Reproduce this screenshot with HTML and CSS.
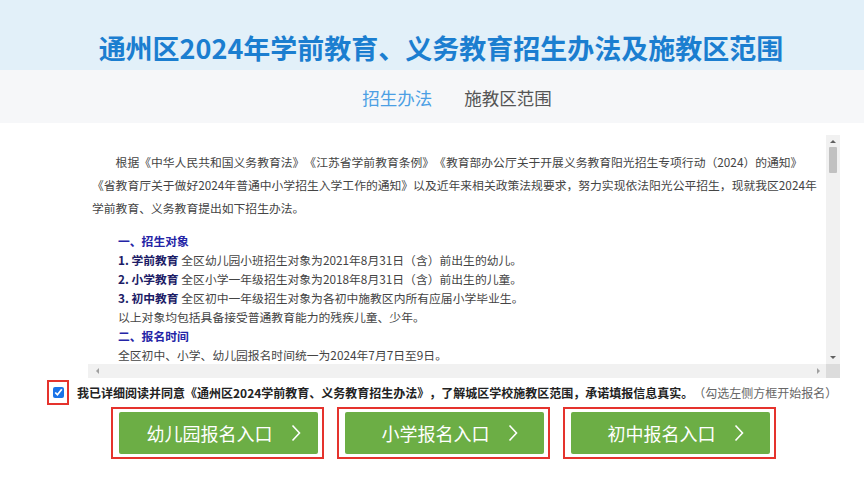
FILE: index.html
```html
<!DOCTYPE html>
<html lang="zh-CN">
<head>
<meta charset="utf-8">
<title>通州区2024年学前教育、义务教育招生办法及施教区范围</title>
<link rel="stylesheet" href="styles.css">
</head>
<body>
<header class="header">
  <h1 class="title">通州区2024年学前教育、义务教育招生办法及施教区范围</h1>
</header>
<nav class="tabs">
  <span class="tab tab-active">招生办法</span>
  <span class="tab">施教区范围</span>
</nav>
<main class="main">
  <div class="scrollbox">
    <div class="viewport">
      <p class="intro">根据《中华人民共和国义务教育法》《江苏省学前教育条例》《教育部办公厅关于开展义务教育阳光招生专项行动（2024）的通知》<br>《省教育厅关于做好2024年普通中小学招生入学工作的通知》以及近年来相关政策法规要求，努力实现依法阳光公平招生，现就我区2024年学前教育、义务教育提出如下招生办法。</p>
      <div class="section">
        <div class="sec-title">一、招生对象</div>
        <div class="line"><b class="label">1. 学前教育</b> 全区幼儿园小班招生对象为2021年8月31日（含）前出生的幼儿。</div>
        <div class="line"><b class="label">2. 小学教育</b> 全区小学一年级招生对象为2018年8月31日（含）前出生的儿童。</div>
        <div class="line"><b class="label">3. 初中教育</b> 全区初中一年级招生对象为各初中施教区内所有应届小学毕业生。</div>
        <div class="line">以上对象均包括具备接受普通教育能力的残疾儿童、少年。</div>
        <div class="sec-title">二、报名时间</div>
        <div class="line">全区初中、小学、幼儿园报名时间统一为2024年7月7日至9日。</div>
      </div>
    </div>
    <div class="vbar">
      <span class="arrow arrow-up"></span>
      <span class="vthumb"></span>
      <span class="vspace"></span>
      <span class="arrow arrow-down"></span>
    </div>
    <div class="hbar">
      <span class="arrow arrow-left"></span>
      <span class="arrow arrow-right"></span>
    </div>
    <div class="corner"></div>
  </div>
  <div class="agree">
    <span class="mark mark-check"><input type="checkbox" class="check" checked></span>
    <span class="agree-text"><b>我已详细阅读并同意《通州区2024学前教育、义务教育招生办法》，了解城区学校施教区范围，承诺填报信息真实。</b><span class="hint">（勾选左侧方框开始报名）</span></span>
  </div>
  <div class="buttons">
    <span class="mark"><a class="btn" href="#">幼儿园报名入口<svg class="chev" viewBox="0 0 10 18" width="10" height="18"><path d="M1.5 1.5 L8.5 9 L1.5 16.5" fill="none" stroke="#fff" stroke-width="1.6"/></svg></a></span>
    <span class="mark"><a class="btn" href="#">小学报名入口<svg class="chev" viewBox="0 0 10 18" width="10" height="18"><path d="M1.5 1.5 L8.5 9 L1.5 16.5" fill="none" stroke="#fff" stroke-width="1.6"/></svg></a></span>
    <span class="mark"><a class="btn" href="#">初中报名入口<svg class="chev" viewBox="0 0 10 18" width="10" height="18"><path d="M1.5 1.5 L8.5 9 L1.5 16.5" fill="none" stroke="#fff" stroke-width="1.6"/></svg></a></span>
  </div>
</main>
</body>
</html>
```
FILE: styles.css
```css
* { box-sizing: border-box; }
html, body { margin: 0; padding: 0; }
body {
  width: 864px;
  height: 492px;
  overflow: hidden;
  background: #fff;
  font-family: "Noto Sans CJK SC", "Noto Sans", sans-serif;
  color: #333;
  text-spacing-trim: space-all;
}
.header {
  height: 70px;
  background: #e2f0f9;
  display: flex;
  align-items: center;
  justify-content: center;
  padding: 26px 0 0 18px;
}
.title {
  margin: 0;
  font-size: 27px;
  line-height: 30px;
  font-weight: 700;
  color: #1b7ed0;
  white-space: nowrap;
}
.tabs {
  height: 53px;
  background: #f6f7f9;
  display: flex;
  align-items: center;
  justify-content: center;
  gap: 32px;
  padding: 2px 0 0 50px;
}
.tab {
  font-size: 17.5px;
  color: #555;
  line-height: 24px;
}
.tab-active { color: #4c9fe4; }
.main {
  padding: 12px 0 0 88px;
}
.scrollbox {
  width: 752px;
  display: grid;
  grid-template-columns: 738px 14px;
  grid-template-rows: 229px 14px;
}
.viewport {
  overflow: hidden;
  padding: 15px 0 0 4px;
  font-size: 11.8px;
}
.intro {
  margin: 0 0 12px;
  text-indent: 2em;
  line-height: 23px;
  color: #444;
}
.section {
  margin-left: 26px;
  line-height: 19px;
  white-space: nowrap;
  color: #444;
}
.sec-title {
  font-weight: 700;
  color: #2424a6;
}
.label {
  color: #1c1c66;
}
.vbar {
  background: #f1f1f1;
  display: flex;
  flex-direction: column;
  align-items: center;
}
.vthumb {
  width: 8px;
  height: 26px;
  background: #c1c1c1;
  border-radius: 1px;
}
.vspace { flex: 1; }
.arrow {
  width: 0;
  height: 0;
  border: 3px solid transparent;
  margin: 4px 0;
}
.arrow-up { border-bottom: 3px solid #606060; border-top-width: 0; margin-top: 5px; }
.arrow-down { border-top: 3px solid #606060; border-bottom-width: 0; margin-bottom: 5px; }
.hbar {
  background: #f1f1f1;
  display: flex;
  align-items: center;
  justify-content: space-between;
  padding: 0 6px 0 8px;
}
.hbar .arrow { margin: 0; }
.arrow-left { border-right: 3px solid #a0a0a0; border-left-width: 0; }
.arrow-right { border-left: 3px solid #a0a0a0; border-right-width: 0; }
.corner { background: #dcdcdc; }
.agree {
  display: flex;
  align-items: center;
  gap: 8px;
  margin: 2px 0 0 -41px;
  font-size: 12px;
  line-height: 16px;
  white-space: nowrap;
}
.mark {
  display: inline-flex;
  border: 2px solid #e5332d;
}
.mark-check {
  width: 22px;
  height: 25px;
  align-items: center;
  justify-content: center;
}
.check {
  width: 11px;
  height: 11px;
  margin: 0;
  accent-color: #1a73e8;
}
.agree-text b { color: #222; }
.hint { color: #666; }
.buttons {
  display: flex;
  gap: 13px;
  margin: 2px 0 0 23px;
}
.buttons .mark {
  padding: 3px 4px 3px 6px;
}
.btn {
  width: 199px;
  height: 42px;
  background: #6cae45;
  border-radius: 2px;
  display: flex;
  align-items: center;
  justify-content: center;
  gap: 18px;
  padding-left: 10px;
  color: #fff;
  text-decoration: none;
  font-size: 18px;
  line-height: 24px;
}
.chev { display: block; }
```
